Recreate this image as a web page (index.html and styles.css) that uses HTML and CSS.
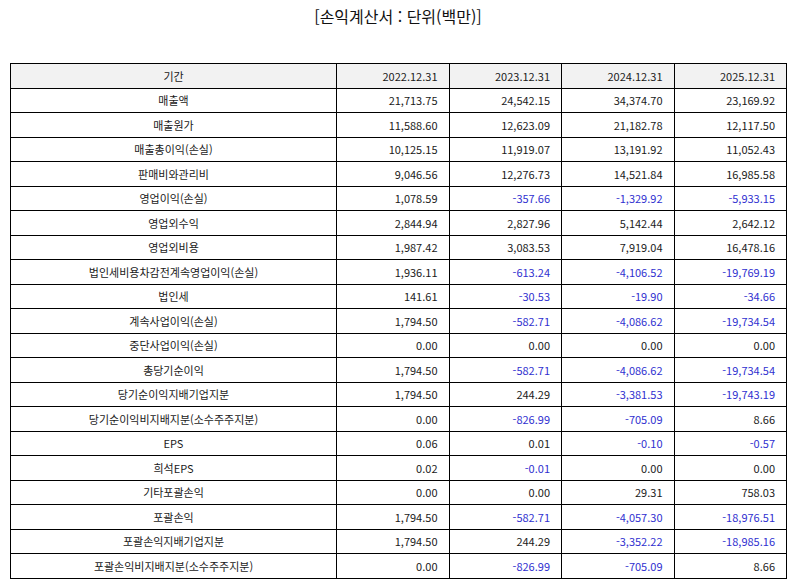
FILE: index.html
```html
<!DOCTYPE html>
<html lang="ko">
<head>
<meta charset="utf-8">
<link rel="stylesheet" href="styles.css">
</head>
<body>
<h1 class="title">[손익계산서 : 단위(백만)]</h1>
<table class="fin">
  <colgroup>
    <col class="c-name"><col class="c-num"><col class="c-num"><col class="c-num"><col class="c-num">
  </colgroup>
  <thead>
    <tr><th class="name">기간</th><th>2022.12.31</th><th>2023.12.31</th><th>2024.12.31</th><th>2025.12.31</th></tr>
  </thead>
  <tbody>
    <tr><td class="name">매출액</td><td>21,713.75</td><td>24,542.15</td><td>34,374.70</td><td>23,169.92</td></tr>
    <tr><td class="name">매출원가</td><td>11,588.60</td><td>12,623.09</td><td>21,182.78</td><td>12,117.50</td></tr>
    <tr><td class="name">매출총이익(손실)</td><td>10,125.15</td><td>11,919.07</td><td>13,191.92</td><td>11,052.43</td></tr>
    <tr><td class="name">판매비와관리비</td><td>9,046.56</td><td>12,276.73</td><td>14,521.84</td><td>16,985.58</td></tr>
    <tr><td class="name">영업이익(손실)</td><td>1,078.59</td><td class="neg">-357.66</td><td class="neg">-1,329.92</td><td class="neg">-5,933.15</td></tr>
    <tr><td class="name">영업외수익</td><td>2,844.94</td><td>2,827.96</td><td>5,142.44</td><td>2,642.12</td></tr>
    <tr><td class="name">영업외비용</td><td>1,987.42</td><td>3,083.53</td><td>7,919.04</td><td>16,478.16</td></tr>
    <tr><td class="name">법인세비용차감전계속영업이익(손실)</td><td>1,936.11</td><td class="neg">-613.24</td><td class="neg">-4,106.52</td><td class="neg">-19,769.19</td></tr>
    <tr><td class="name">법인세</td><td>141.61</td><td class="neg">-30.53</td><td class="neg">-19.90</td><td class="neg">-34.66</td></tr>
    <tr><td class="name">계속사업이익(손실)</td><td>1,794.50</td><td class="neg">-582.71</td><td class="neg">-4,086.62</td><td class="neg">-19,734.54</td></tr>
    <tr><td class="name">중단사업이익(손실)</td><td>0.00</td><td>0.00</td><td>0.00</td><td>0.00</td></tr>
    <tr><td class="name">총당기순이익</td><td>1,794.50</td><td class="neg">-582.71</td><td class="neg">-4,086.62</td><td class="neg">-19,734.54</td></tr>
    <tr><td class="name">당기순이익지배기업지분</td><td>1,794.50</td><td>244.29</td><td class="neg">-3,381.53</td><td class="neg">-19,743.19</td></tr>
    <tr><td class="name">당기순이익비지배지분(소수주주지분)</td><td>0.00</td><td class="neg">-826.99</td><td class="neg">-705.09</td><td>8.66</td></tr>
    <tr><td class="name">EPS</td><td>0.06</td><td>0.01</td><td class="neg">-0.10</td><td class="neg">-0.57</td></tr>
    <tr><td class="name">희석EPS</td><td>0.02</td><td class="neg">-0.01</td><td>0.00</td><td>0.00</td></tr>
    <tr><td class="name">기타포괄손익</td><td>0.00</td><td>0.00</td><td>29.31</td><td>758.03</td></tr>
    <tr><td class="name">포괄손익</td><td>1,794.50</td><td class="neg">-582.71</td><td class="neg">-4,057.30</td><td class="neg">-18,976.51</td></tr>
    <tr><td class="name">포괄손익지배기업지분</td><td>1,794.50</td><td>244.29</td><td class="neg">-3,352.22</td><td class="neg">-18,985.16</td></tr>
    <tr><td class="name">포괄손익비지배지분(소수주주지분)</td><td>0.00</td><td class="neg">-826.99</td><td class="neg">-705.09</td><td>8.66</td></tr>
  </tbody>
</table>
</body>
</html>
```

FILE: styles.css
```css
html, body {
  margin: 0;
  padding: 0;
  background: #ffffff;
}
body {
  padding: 0 8px 0 10px;
  font-family: "Noto Sans CJK KR", "Noto Sans", sans-serif;
  color: #1a1a1a;
}
.title {
  margin: 0;
  padding-top: 4px;
  height: 63px;
  box-sizing: border-box;
  text-align: center;
  font-size: 16px;
  font-weight: normal;
  line-height: 24px;
  color: #111111;
}
.fin {
  width: 776px;
  border-collapse: collapse;
  table-layout: fixed;
  border: 1.5px solid #000000;
  font-size: 11px;
}
.c-name { width: 326px; }
.c-num { width: 112.5px; }
.fin th,
.fin td {
  border: 1px solid #000000;
  height: 23.5px;
  padding: 0 11px 0 4px;
  text-align: right;
  font-weight: normal;
  white-space: nowrap;
  line-height: 14px;
}
.fin thead th {
  background: #f2f2f2;
}
.fin .name {
  text-align: center;
  padding: 0 4px;
}
.fin .neg {
  color: #3030d0;
}
```
